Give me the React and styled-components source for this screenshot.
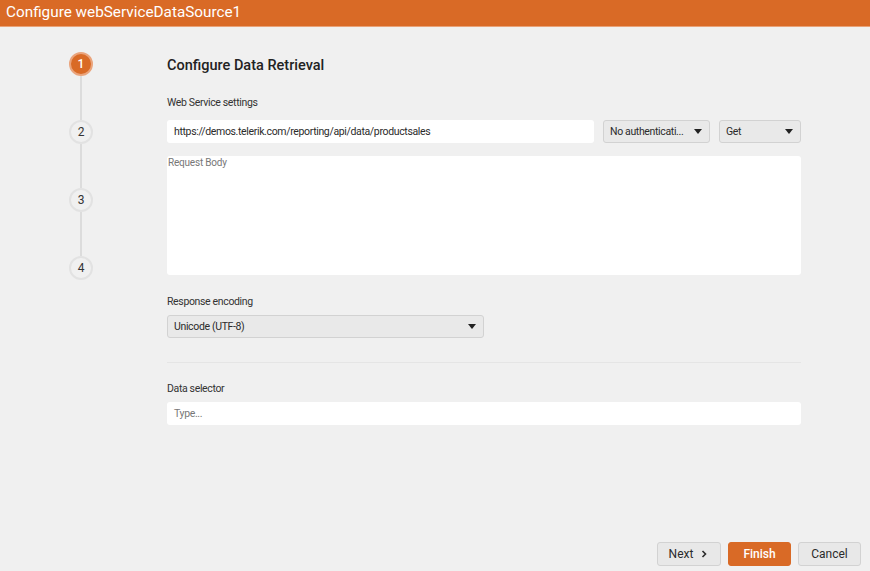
import React from 'react';
import styled, { createGlobalStyle } from "styled-components";

const GlobalStyle = createGlobalStyle`
  html, body { margin: 0; padding: 0; }
  body {
    background: #f0f0f0;
    font-family: Roboto, "Noto Sans", sans-serif;
    color: #2b2b2b;
  }
`;

const steps = [1, 2, 3, 4];

function App() {
  return (
    <Window>
      <GlobalStyle />
      <Header>Configure webServiceDataSource1</Header>
      <Body>
        <Stepper>
          {steps.map((n, i) => (
            <Step key={n}>
              <Circle $active={n === 1}>{n}</Circle>
              {i < steps.length - 1 && <Line />}
            </Step>
          ))}
        </Stepper>
        <Content>
          <Title>Configure Data Retrieval</Title>
          <Label>Web Service settings</Label>
          <Row>
            <TextBox style={{ flex: 1 }}>https://demos.telerik.com/reporting/api/data/productsales</TextBox>
            <Select $width="107px">
              <span>No authenticati...</span>
              <Caret />
            </Select>
            <Select $width="82px">
              <span>Get</span>
              <Caret />
            </Select>
          </Row>
          <TextArea>Request Body</TextArea>
          <Label $top="20px" $bottom="6px">Response encoding</Label>
          <Select $width="317px">
            <span>Unicode (UTF-8)</span>
            <Caret />
          </Select>
          <Separator />
          <Label $bottom="6px">Data selector</Label>
          <TextBox $placeholder>Type...</TextBox>
        </Content>
      </Body>
      <Footer>
        <Button $width="64px">
          Next <Chevron viewBox="0 0 10 10"><path d="M3.5 2 L6.5 5 L3.5 8" /></Chevron>
        </Button>
        <Button $primary $width="63px">Finish</Button>
        <Button $width="63px">Cancel</Button>
      </Footer>
    </Window>
  );
}

const Window = styled.div`
  width: 870px;
  height: 571px;
  display: flex;
  flex-direction: column;
  background: #f0f0f0;
  overflow: hidden;
`;

const Header = styled.div`
  height: 27px;
  background: #d96a26;
  color: #fff;
  font-size: 15.3px;
  line-height: 24px;
  padding-left: 6px;
  border-bottom: 1px solid #e9a277;
  box-sizing: border-box;
`;

const Body = styled.div`
  flex: 1;
  display: flex;
`;

const Stepper = styled.div`
  width: 167px;
  padding-top: 25px;
  display: flex;
  flex-direction: column;
  align-items: flex-start;
  padding-left: 69px;
  box-sizing: border-box;
`;

const Step = styled.div`
  display: flex;
  flex-direction: column;
  align-items: center;
  width: 24px;
`;

const Circle = styled.div`
  width: 24px;
  height: 24px;
  border-radius: 50%;
  box-sizing: border-box;
  display: flex;
  align-items: center;
  justify-content: center;
  font-size: 12px;
  font-weight: ${p => (p.$active ? 500 : 400)};
  color: ${p => (p.$active ? "#fff" : "#333")};
  background: ${p => (p.$active ? "#d96a26" : "#f0f0f0")};
  border: 2px solid ${p => (p.$active ? "#eaa47c" : "#e2e2e2")};
`;

const Line = styled.div`
  width: 2px;
  height: 44px;
  background: #dcdcdc;
`;

const Content = styled.div`
  width: 634px;
  padding-top: 30px;
  display: flex;
  flex-direction: column;
  align-items: flex-start;
`;

const Title = styled.div`
  font-size: 14.5px;
  font-weight: 500;
  color: #222;
  line-height: 18px;
  margin-bottom: 21px;
`;

const Label = styled.div`
  font-size: 10.5px;
  letter-spacing: -0.35px;
  color: #333;
  line-height: 14px;
  margin-top: ${p => p.$top || "0"};
  margin-bottom: ${p => p.$bottom || "10px"};
`;

const Row = styled.div`
  display: flex;
  gap: 9px;
  width: 100%;
  margin-bottom: 13px;
`;

const TextBox = styled.div`
  align-self: stretch;
  height: 23px;
  box-sizing: border-box;
  background: #fff;
  border-radius: 3px;
  padding: 0 7px;
  font-size: 10.5px;
  letter-spacing: -0.35px;
  line-height: 23px;
  color: ${p => (p.$placeholder ? "#777" : "#2b2b2b")};
`;

const Select = styled.div`
  width: ${p => p.$width};
  height: 23px;
  box-sizing: border-box;
  background: #e9e9e9;
  border: 1px solid #d2d2d2;
  border-radius: 3px;
  padding: 0 7px 0 6px;
  display: flex;
  align-items: center;
  justify-content: space-between;
  font-size: 10.5px;
  letter-spacing: -0.35px;
  color: #2b2b2b;
`;

const Caret = styled.i`
  width: 0;
  height: 0;
  border-left: 4px solid transparent;
  border-right: 4px solid transparent;
  border-top: 5px solid #222;
`;

const TextArea = styled.div`
  align-self: stretch;
  height: 119px;
  background: #fff;
  border-radius: 3px;
  padding: 1px 1px;
  box-sizing: border-box;
  font-size: 10px;
  letter-spacing: -0.2px;
  color: #777;
  line-height: 12px;
`;

const Separator = styled.div`
  align-self: stretch;
  height: 1px;
  background: #e5e5e5;
  margin: 24px 0 19px;
`;

const Footer = styled.div`
  display: flex;
  justify-content: flex-end;
  gap: 7px;
  padding: 0 9px 5px 0;
`;

const Button = styled.div`
  width: ${p => p.$width};
  height: 24px;
  box-sizing: border-box;
  border-radius: 3px;
  display: flex;
  align-items: center;
  justify-content: center;
  gap: 6px;
  font-size: 12px;
  font-weight: ${p => (p.$primary ? 500 : 400)};
  background: ${p => (p.$primary ? "#d96a26" : "#e8e8e8")};
  color: ${p => (p.$primary ? "#fff" : "#2b2b2b")};
  border: 1px solid ${p => (p.$primary ? "#d96a26" : "#d2d2d2")};
`;

const Chevron = styled.svg`
  width: 10px;
  height: 10px;
  fill: none;
  stroke: #2b2b2b;
  stroke-width: 1.6;
`;

export default App;
